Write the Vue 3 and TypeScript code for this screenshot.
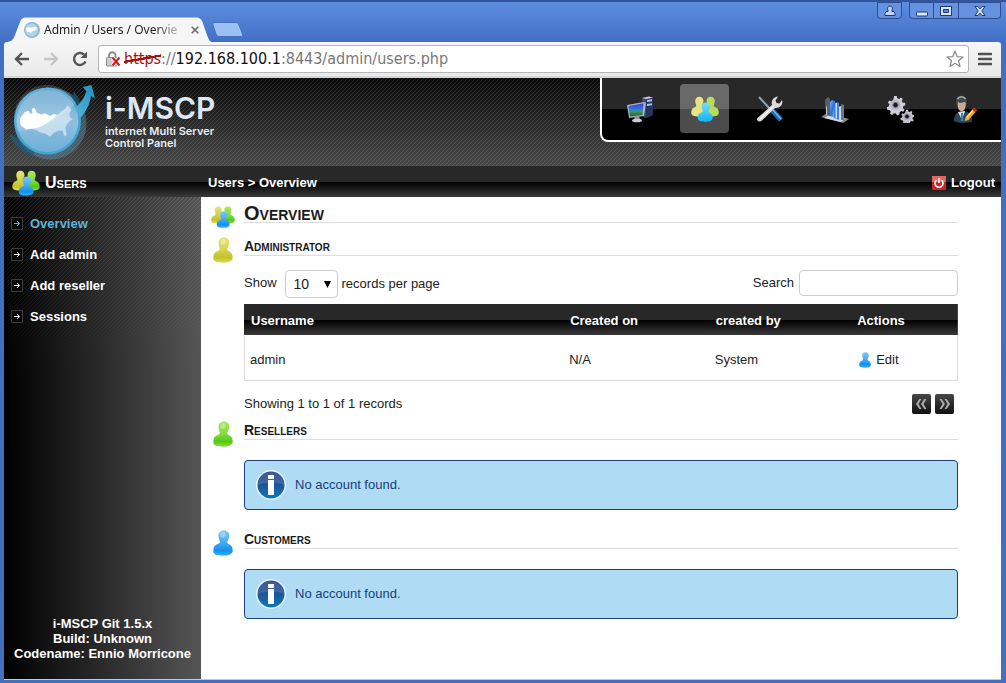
<script setup lang="ts">
import { ref } from 'vue'

interface NavItem { id: string; label: string }
interface Account { username: string; createdOn: string; createdBy: string }

const modules: NavItem[] = [
  { id: 'computer', label: 'General' },
  { id: 'users', label: 'Users' },
  { id: 'tools', label: 'System tools' },
  { id: 'stats', label: 'Statistics' },
  { id: 'gears', label: 'Settings' },
  { id: 'profile', label: 'Profile' },
]
const activeModule = ref('users')

const menu: string[] = ['Overview', 'Add admin', 'Add reseller', 'Sessions']
const activeMenu = ref('Overview')

const pageSize = ref('10')
const search = ref('')
const accounts: Account[] = [{ username: 'admin', createdOn: 'N/A', createdBy: 'System' }]

const emptyGroups = [
  { title: 'Resellers', tone: 'green' },
  { title: 'Customers', tone: 'blue' },
]
</script>

<template>
  <svg class="sprite" aria-hidden="true">
    <defs>
      <linearGradient id="gYellow" x1="0" y1="0" x2="0" y2="1"><stop offset="0" stop-color="#e6e27a" /><stop offset=".5" stop-color="#d4d348" /><stop offset=".8" stop-color="#c2c32a" /><stop offset="1" stop-color="#e0de50" /></linearGradient>
      <linearGradient id="gGreen" x1="0" y1="0" x2="0" y2="1"><stop offset="0" stop-color="#a8e860" /><stop offset=".5" stop-color="#80dc3c" /><stop offset=".8" stop-color="#54c814" /><stop offset="1" stop-color="#8be040" /></linearGradient>
      <linearGradient id="gBlue" x1="0" y1="0" x2="0" y2="1"><stop offset="0" stop-color="#7cc8f8" /><stop offset=".5" stop-color="#3fa9f2" /><stop offset=".8" stop-color="#1190ec" /><stop offset="1" stop-color="#35b4fa" /></linearGradient>
      <linearGradient id="gCyan" x1="0" y1="0" x2="0" y2="1"><stop offset="0" stop-color="#7edcff" /><stop offset="1" stop-color="#12b4f4" /></linearGradient>
      <linearGradient id="gGlobe" x1="0" y1="0" x2="0" y2="1"><stop offset="0" stop-color="#6da8cf" /><stop offset=".5" stop-color="#8fbfdf" /><stop offset="1" stop-color="#6fb0d8" /></linearGradient>
      <linearGradient id="gArrow" x1="0" y1="1" x2="1" y2="0"><stop offset="0" stop-color="#58b4da" /><stop offset="1" stop-color="#1f8fc0" /></linearGradient>
      <linearGradient id="gScreen" x1="0" y1="0" x2="0" y2="1"><stop offset="0" stop-color="#4a3cc8" /><stop offset=".5" stop-color="#2c80e0" /><stop offset=".6" stop-color="#3d9c58" /><stop offset="1" stop-color="#255c38" /></linearGradient>
      <linearGradient id="gInfo" x1="0" y1="0" x2="0" y2="1"><stop offset="0" stop-color="#2b3f86" /><stop offset=".5" stop-color="#1c5697" /><stop offset="1" stop-color="#0b78bd" /></linearGradient>
      <linearGradient id="gBar" x1="0" y1="0" x2="1" y2="1"><stop offset="0" stop-color="#7db4ff" /><stop offset=".5" stop-color="#2c6fd8" /><stop offset="1" stop-color="#9cc8ff" /></linearGradient>
      <path id="person" d="M11 .5C7.500 .5 5.400 2.800 5.500 6.200C5.600 9 6.800 10.200 6.900 12C6.900 13.300 5.300 13.600 3.500 14.500C1.200 15.600 .3 18 .3 21.300C.3 24.500 4 25.700 9.800 25.700C15.800 25.700 19.700 24.300 19.700 20.800C19.700 18 18.900 15.900 17.300 14.900C15.700 13.900 14.200 13.600 14.200 12C14.300 10.200 16.200 9 16.300 6.200C16.400 2.800 14.500 .5 11 .5Z" />
      <symbol id="yellow" viewBox="0 0 20 26"><use href="#person" fill="url(#gYellow)" /><ellipse cx="10" cy="5" rx="2.600" ry="3" fill="#fff" opacity=".3" /></symbol>
      <symbol id="green" viewBox="0 0 20 26"><use href="#person" fill="url(#gGreen)" /><ellipse cx="10" cy="5" rx="2.600" ry="3" fill="#fff" opacity=".3" /></symbol>
      <symbol id="blue" viewBox="0 0 20 26"><use href="#person" fill="url(#gBlue)" /><ellipse cx="10" cy="5" rx="2.600" ry="3" fill="#fff" opacity=".3" /></symbol>
      <symbol id="users" viewBox="0 0 30 28">
        <g transform="translate(0 .5) scale(.82 .84)"><use href="#person" fill="url(#gYellow)" /></g>
        <g transform="translate(30 .5) scale(-.82 .84)"><use href="#person" fill="url(#gGreen)" /></g>
        <g transform="translate(7 6.500) scale(.82 .82)"><use href="#person" fill="url(#gBlue)" /></g>
      </symbol>
      <symbol id="usersLight" viewBox="0 0 30 28">
        <g transform="translate(0 .5) scale(.82 .84)"><use href="#person" fill="#e6e480" /></g>
        <g transform="translate(30 .5) scale(-.82 .84)"><use href="#person" fill="#b4de58" /></g>
        <g transform="translate(7 6.500) scale(.82 .82)"><use href="#person" fill="url(#gCyan)" /></g>
      </symbol>
      <path id="gear" d="M-1.300 -9h2.600l.4 2.200 2 .7 1.700-1.500 1.900 1.600-1 2 1 1.800 2.200 0 .4 2.500-2.100.8-.4 2.100 1.700 1.500-1.300 2.100-2.100-.7-1.700 1.300 0 2.200-2.400.8-1.200-1.900-2.100-.2-1.500 1.700-2.200-1.200.6-2.200-1.300-1.700-2.300-.2-.3-2.500 2.100-.9.500-2.100-1.500-1.700 1.500-1.900 2 .9 1.700-1.200z" />
    </defs>
  </svg>

  <div class="window">
    <header class="titlebar">
      <div class="tab">
        <svg class="tab-shape" viewBox="0 0 206 25" preserveAspectRatio="none" aria-hidden="true"><path d="M0 25C5 25 7 23 9 18L14 5C15.500 1.500 17 .5 20 .5H190C194 .5 195 2 196.500 5L201 18C203 23 204 25 206 25Z" fill="#f6f6f6" /></svg>
        <svg class="favicon" viewBox="0 0 16 16" aria-hidden="true"><circle cx="8" cy="8" r="8" fill="#8cb9d6" /><circle cx="7.500" cy="8" r="6.500" fill="#b5d4e8" /><path d="M2 6l3-1 2 1 3-1 3 0-1 3-3 1-2 2-2-1-2 0z" fill="#fff" /></svg>
        <span class="tab-title">Admin / Users / Overvie</span>
        <button class="tab-close" aria-label="Close tab"><svg viewBox="0 0 8 8"><path d="M.7.7l6.600 6.600M7.300.7L.7 7.300" stroke="#666" stroke-width="1.500" /></svg></button>
      </div>
      <button class="new-tab" aria-label="New tab"><svg viewBox="0 0 32 16"><path d="M3 .5H23C25 .5 26 1 27 3L30.500 12C31 14 30.500 14.500 29 14.500H8C6 14.500 5 14 4 12L1 3C.5 1 1 .5 3 .5Z" fill="#9cc0f2" stroke="#4373bd" /></svg></button>
      <div class="win-buttons">
        <button class="win user" aria-label="Profile"><svg viewBox="0 0 12 12"><path d="M6 1a2.500 2.500 0 0 1 2 4v1.500h2l1 2v2H1v-2l1-2h2V5a2.500 2.500 0 0 1 2-4z" fill="#bdd2f5" stroke="#1c3873" /></svg></button>
        <div class="win-group">
          <button class="win min" aria-label="Minimize"><svg viewBox="0 0 12 12"><rect x=".5" y="7" width="11" height="4" rx="1" fill="#d9e5fa" stroke="#1c3873" /></svg></button>
          <button class="win mid" aria-label="Maximize"><svg viewBox="0 0 12 12"><path d="M.5 1.500h11v9H.5z" fill="#d9e5fa" stroke="#1c3873" /><path d="M3.500 4.500h5v3h-5z" fill="#5c8bdc" stroke="#1c3873" /></svg></button>
          <button class="win end" aria-label="Close"><svg viewBox="0 0 12 12"><path d="M1 1.500h3l2 2.500 2-2.500h3L7.700 6 11 10.500H8L6 8l-2 2.500H1L4.300 6z" fill="#d9e5fa" stroke="#1c3873" /></svg></button>
        </div>
      </div>
    </header>

    <div class="toolbar">
      <button class="tool" aria-label="Back"><svg viewBox="0 0 16 16"><path d="M15 8H2.500M8 2L2 8l6 6" fill="none" stroke="#555" stroke-width="2.400" /></svg></button>
      <button class="tool" aria-label="Forward"><svg viewBox="0 0 16 16"><path d="M1 8h12.500M8 2l6 6-6 6" fill="none" stroke="#c6c6c6" stroke-width="2.400" /></svg></button>
      <button class="tool" aria-label="Reload"><svg viewBox="0 0 16 16"><path d="M13.500 10.500A6 6 0 1 1 12 3.500" fill="none" stroke="#555" stroke-width="2.400" /><path d="M15 .5V7H8.500z" fill="#555" /></svg></button>
      <div class="omnibox">
        <svg class="lock" viewBox="0 0 15 16" aria-hidden="true"><path d="M3 7V4.500a3 3 0 0 1 6.500 0V7" fill="none" stroke="#888" stroke-width="1.800" /><rect x=".5" y="6.500" width="11" height="8.500" rx="1" fill="#ccc" stroke="#888" /><path d="M6.500 6.500l7 8M13.500 6.500l-7 8" stroke="#fff" stroke-width="3.500" /><path d="M6.500 6.500l7 8M13.500 6.500l-7 8" stroke="#cc1b1b" stroke-width="2" /></svg>
        <div class="url" role="textbox" aria-label="Address" contenteditable="true" spellcheck="false"><span class="scheme">https</span>://<span class="host">192.168.100.1</span>:8443/admin/users.php</div>
        <button class="star" aria-label="Bookmark"><svg viewBox="0 0 18 18"><path d="M9 1.200l2.200 5.400 5.800.4-4.500 3.700 1.500 5.700L9 13.300l-5 3.100 1.500-5.700L1 7l5.800-.4z" fill="#fff" stroke="#888" stroke-width="1.200" stroke-linejoin="round" /></svg></button>
      </div>
      <button class="tool menu-btn" aria-label="Menu"><svg viewBox="0 0 14 14"><path d="M1 2h12M1 7h12M1 12h12" stroke="#505050" stroke-width="2.600" stroke-linecap="round" /></svg></button>
    </div>

    <div class="page">
      <header class="masthead">
        <a href="#" class="brand">
          <svg class="globe" viewBox="0 0 94 84" aria-hidden="true">
            <circle cx="46.500" cy="45.500" r="36" fill="#5f93ad" opacity=".45" />
            <path d="M5 56A39 39 0 0 0 30 79L30 72A32 32 0 0 1 14 60Z" fill="#245c79" opacity=".7" />
            <path d="M66 22l4.500-8 5 8-3 10z" fill="#1f4a5c" />
            <circle cx="43.500" cy="43" r="33.500" fill="#3fa5d6" />
            <circle cx="43.500" cy="43" r="31" fill="url(#gGlobe)" />
            <g transform="scale(.3333)">
              <path d="M48 122L62 103 74 98 80 108 86 106 84 92 92 90 98 104 112 110 122 106 138 114 150 108 160 110 172 100 184 92 190 82 196 86 202 96 196 108 198 118 206 124 196 130 188 140 184 150 188 172 180 174 176 158 164 158 150 164 138 176 122 166 110 164 96 156 80 152 66 156 50 142Z" fill="#fff" opacity=".5" />
              <path d="M48 122L62 103 74 98 80 108 86 106 84 92 92 90 98 104 112 110 122 106 138 114 150 108 158 112C140 130 120 144 98 150L80 152 66 152 50 142Z" fill="#fff" />
              <path d="M40 160C100 156 160 132 216 76A93 93 0 0 0 40 160Z" fill="#fff" opacity=".14" />
            </g>
            <path d="M76 40C82 34 86 26 87 18L91 20.500 87.500 7 79 9 82.500 13.500C80 20 77 25 71 30Z" fill="url(#gArrow)" />
          </svg>
          <span class="brand-text">
            <strong>i-MSCP</strong>
            <span>internet Multi Server<br>Control Panel</span>
          </span>
        </a>
        <nav class="modules" aria-label="Modules">
          <a v-for="m in modules" :key="m.id" href="#" :aria-label="m.label" :class="{ active: m.id === activeModule }" @click.prevent="activeModule = m.id">
            <svg v-if="m.id === 'computer'" viewBox="0 0 28 28"><path d="M16 3l7-1.500 4 1.500V20l-7 3-4-2z" fill="#394a6c" /><path d="M20 3.500L27 3v17l-7 3z" fill="#26355c" /><path d="M21 5l5-.7v2L21 7zM21 9l5-.7v2L21 11z" fill="#b0c0e6" /><path d="M16 3l7-1.500 4 1.200-7 1.300z" fill="#c5cfdf" /><path d="M1 10l17-3 2 1-2 13-15 2z" fill="#a9b4cc" /><path d="M2.500 11l15-2.700L16.500 20 4 21.500z" fill="url(#gScreen)" /><path d="M9 21l4 0 1 3 1 2H7l1-2z" fill="#8d949c" /><ellipse cx="11" cy="25.500" rx="5" ry="1.800" fill="#ccc" /></svg>
            <svg v-else-if="m.id === 'users'" viewBox="0 0 30 28"><use href="#usersLight" /></svg>
            <svg v-else-if="m.id === 'tools'" viewBox="0 0 28 28"><path d="M3 2l12 13" stroke="#8ea5b5" stroke-width="2" /><path d="M15 14l10 11" stroke="#1f68b4" stroke-width="5" /><path d="M16 14l9 10" stroke="#79b7ee" stroke-width="1.300" /><path d="M1.500 25.500c-1-1-.5-2.200.5-3L16 10c-1-4 1-8 6-8.500l-2.500 4 1 2.500 3 .5L26 5c1.500 5-2.500 8.500-7 8L6 25.500c-1.500 1.300-3.500 1.300-4.500 0z" fill="#d9d9d9" /><path d="M4 24L18 11" stroke="#fff" stroke-width="1.200" /></svg>
            <svg v-else-if="m.id === 'stats'" viewBox="0 0 28 28"><path d="M0 22l6-4 22 6-6 4z" fill="#858585" /><path d="M3 23l5-3 16 4-4 3z" fill="#d7d7d7" /><path d="M4 5l3-3 2 2v17l-4-1z" fill="#59626c" /><path d="M5 12l1-1v9l-1 0z" fill="#bfc8d0" /><path d="M9 7l2-2 3 1v17l-5-2z" fill="url(#gBar)" /><path d="M13 9l3-2 2 1v17l-5-2z" fill="#3c7fdf" /><path d="M14.500 8l1.500 0v16l-1.500-1z" fill="#bedafa" /><path d="M18 12l1-1 2 1v13l-3-1z" fill="#c9dced" /><path d="M20 10l1-1 2 1v15l-3 0z" fill="#6c7782" /></svg>
            <svg v-else-if="m.id === 'gears'" viewBox="0 0 28 28"><use href="#gear" transform="translate(9.500 10)" fill="#cfcfda" /><circle cx="9.500" cy="10" r="5.500" fill="#b9b9c8" /><circle cx="9.500" cy="10" r="2.700" fill="#171717" stroke="#868694" /><g transform="translate(21 21.500) scale(.75)"><use href="#gear" fill="#c3c3d0" /><circle r="5" fill="#aeaebd" /><circle r="2.800" fill="#111" stroke="#777" /></g></svg>
            <svg v-else viewBox="0 0 28 28"><path d="M3 26c0-6 2-8.500 7-9.500l5 0c4 1 6 5 6 10-5 2-14 2-18-.5z" fill="#2b4558" /><path d="M7 17l4 8 3-9z" fill="#d5e5ef" /><path d="M10 18l2 0 .5 8H10z" fill="#3185b5" /><path d="M6 7c0-5 8-6 9 0l-.5 5c-1 5-5.500 6-7.500 1z" fill="#c9aa93" /><path d="M6 12L5 6c0-7 11-7 11 1v3l-2-3-5 1-2-1z" fill="#45484a" /><path d="M6.500 4c2-3 6-3 8 0" stroke="#a5a9ab" stroke-width="1.600" fill="none" /><path d="M14.500 22.500l7-8 3 2.500-7 8-4 1z" fill="#efab29" /><path d="M15.500 22.500l7-8" stroke="#ffe183" stroke-width="1.400" /><path d="M21 14.500l2-2 3.500 2.500-2 2.500z" fill="#cd2a1c" /></svg>
          </a>
        </nav>
      </header>

      <div class="location">
        <h1 class="module-title"><svg viewBox="0 0 30 28" aria-hidden="true"><use href="#users" /></svg>Users</h1>
        <nav class="crumbs" aria-label="Breadcrumb"><a href="#">Users</a> &gt; <a href="#">Overview</a></nav>
        <a class="logout" href="#"><svg viewBox="0 0 14 14" aria-hidden="true"><rect width="14" height="14" rx="1" fill="#c82525" /><path d="M0 0h14v6H0z" fill="#e36666" /><path d="M4.500 4.200a4 4 0 1 0 5 0M7 2v5" fill="none" stroke="#fff" stroke-width="1.600" /></svg>Logout</a>
      </div>

      <div class="columns">
        <aside class="sidebar">
          <ul>
            <li v-for="item in menu" :key="item">
              <a href="#" :class="{ current: item === activeMenu }" @click.prevent="activeMenu = item">
                <svg viewBox="0 0 12 13" aria-hidden="true"><path d="M.5.5h11v12H.5z" fill="#080808" stroke="#3c3c3c" /><path d="M3 6.500h5.500M6 4l2.500 2.500L6 9" fill="none" stroke="currentColor" /></svg>{{ item }}
              </a>
            </li>
          </ul>
          <p class="version">i-MSCP Git 1.5.x<br>Build: Unknown<br>Codename: Ennio Morricone</p>
        </aside>

        <main class="content">
          <section class="group lead">
            <svg class="group-icon" viewBox="0 0 30 28" aria-hidden="true"><use href="#users" /></svg>
            <h2 class="large">Overview</h2>
          </section>

          <section class="group">
            <svg class="group-icon" viewBox="0 0 20 26" aria-hidden="true"><use href="#yellow" /></svg>
            <div>
              <h2>Administrator</h2>
              <div class="filters">
                <label for="page-size">Show</label>
                <span class="select-box">
                  <select id="page-size" v-model="pageSize"><option>10</option><option>15</option><option>25</option><option>50</option></select>
                  <svg viewBox="0 0 7 7" aria-hidden="true"><path d="M0 0h7L3.500 7z" /></svg>
                </span>
                <span>records per page</span>
                <label class="search-label" for="search">Search</label>
                <input id="search" v-model="search" type="text">
              </div>
              <table>
                <colgroup><col class="c-user"><col class="c-date"><col class="c-by"><col></colgroup>
                <thead><tr><th>Username</th><th>Created on</th><th>created by</th><th>Actions</th></tr></thead>
                <tbody>
                  <tr v-for="a in accounts" :key="a.username">
                    <td>{{ a.username }}</td><td>{{ a.createdOn }}</td><td>{{ a.createdBy }}</td>
                    <td><a class="edit" href="#"><svg viewBox="0 0 20 26" preserveAspectRatio="none" aria-hidden="true"><use href="#person" fill="url(#gBlue)" /></svg>Edit</a></td>
                  </tr>
                </tbody>
              </table>
              <div class="table-foot">
                <span>Showing 1 to 1 of 1 records</span>
                <div class="pager">
                  <button aria-label="Previous page"><svg viewBox="0 0 19 20"><path d="M9.500 5h-2.200L4 10l3.300 5h2.200L6.500 10zM14.500 5h-2.200L9 10l3.300 5h2.200L11.500 10z" /></svg></button>
                  <button aria-label="Next page"><svg viewBox="0 0 19 20"><path d="M4.500 5h2.200L10 10l-3.300 5H4.500L7.500 10zM9.500 5h2.200L15 10l-3.300 5H9.500L12.500 10z" /></svg></button>
                </div>
              </div>
            </div>
          </section>

          <section v-for="g in emptyGroups" :key="g.title" class="group empty">
            <svg class="group-icon" viewBox="0 0 20 26" aria-hidden="true"><use :href="'#' + g.tone" /></svg>
            <div>
              <h2>{{ g.title }}</h2>
              <p class="notice">
                <svg viewBox="0 0 30 30" aria-hidden="true"><circle cx="15" cy="15" r="15" fill="#e8f5fd" /><circle cx="15" cy="15" r="13.500" fill="url(#gInfo)" /><path d="M2 15C8 12 22 12 28 15A13 13 0 0 0 2 15Z" fill="#fff" opacity=".12" /><path d="M12 5h6v4h-6zM12 10h6v15h-6z" fill="#fff" /></svg>
                No account found.
              </p>
            </div>
          </section>
        </main>
      </div>
    </div>
  </div>
</template>

<style>
body { background: #3f69b0; }
</style>

<style scoped>
.sprite { position: absolute; width: 0; height: 0; }
.window, .window * { box-sizing: border-box; }
.window {
  display: flex; flex-direction: column; min-height: 100vh;
  padding: 0 5px 4px 4px;
  border-bottom: 1px solid #2f4d80;
  background: linear-gradient(#31549c 0 2px, #5d8ddf 2px, #416fc6 42px, #4270bb);
  font: 13px/16px "Liberation Sans", Arial, sans-serif; color: #222;
}
button { padding: 0; border: 0; background: none; display: block; }
svg { display: block; flex: none; }
a { color: inherit; text-decoration: none; }

/* browser frame */
.titlebar { display: flex; height: 42px; align-items: flex-end; }
.tab { position: relative; display: flex; align-items: center; width: 206px; height: 25px; margin-left: 2px; padding: 0 10px 0 18px; }
.tab-shape { position: absolute; inset: 0; width: 100%; height: 100%; }
.favicon { position: relative; width: 16px; height: 16px; }
.tab-title {
  position: relative; flex: 1; margin-left: 4px; white-space: nowrap;
  font: 12px/16px "Noto Sans", sans-serif; color: #222;
  mask-image: linear-gradient(90deg, #000 80%, rgba(0, 0, 0, .2));
}
.tab-close { position: relative; width: 8px; margin: 0 3px 0 10px; }
.new-tab { width: 32px; height: 16px; margin: 0 0 4px; }
.win-buttons { display: flex; gap: 7px; margin-left: auto; align-self: flex-start; padding-top: 2px; }
.win-group { display: flex; }
.win { display: flex; align-items: center; justify-content: center; width: 25px; height: 17px; border: 1px solid #2d4f92; background: #6491e0; }
.win svg { width: 12px; height: 12px; }
.user { border-radius: 0 0 4px 4px; }
.min { border-radius: 0 0 0 4px; }
.mid { border-left: 0; }
.end { width: 42px; border-left: 0; border-radius: 0 0 4px; }
.toolbar { display: flex; align-items: center; gap: 13px; height: 36px; padding: 0 9px 0 10px; border-bottom: 2px solid #d2d6d6; border-radius: 3px 3px 0 0; background: linear-gradient(#f6f6f6, #e9e9e9); }
.tool { width: 16px; }
.menu-btn { width: 14px; }
.omnibox { display: flex; align-items: center; flex: 1; height: 28px; margin: 0 -4px 0 -3px; padding: 0 4px 0 7px; border: 1px solid #b4b4b4; border-radius: 3px; background: #fff; }
.lock { width: 15px; height: 16px; margin-right: 3px; }
.url { flex: 1; font: 16px/22px "DejaVu Sans Condensed", "DejaVu Sans", sans-serif; color: #777; white-space: nowrap; outline: 0; }
.scheme { color: #a51010; background: linear-gradient(170deg, transparent 46%, #a51010 47% 55%, transparent 56%); }
.host { color: #111; }
.star { width: 18px; }

/* panel header */
.page { display: flex; flex-direction: column; flex: 1; background: #fff; box-shadow: 0 1px #b8cdec; }
.masthead {
  display: flex; justify-content: space-between; align-items: flex-start; height: 88px;
  background:
    linear-gradient(135deg, transparent 42%, rgba(255, 255, 255, .13) 42% 58%, transparent 58%) 0 0 / 4px 4px,
    linear-gradient(#080808, #484848);
}
.brand { display: flex; color: #e9eef4; }
.globe { width: 94px; height: 84px; }
.brand-text { padding: 13px 0 0 7px; font: 600 11px/12px Inter, sans-serif; }
.brand-text strong { display: block; font: 600 30px/34px Inter, sans-serif; color: #dce8f6; }
.brand-text > span { display: block; }
.modules { display: flex; gap: 16px; padding: 6px 12px 7px 13px; border: solid #fff; border-width: 0 0 2px 2px; border-radius: 0 0 0 8px; background: linear-gradient(#282828 31px, #000 31px); }
.modules a { display: grid; place-items: center; width: 49px; height: 49px; border-radius: 4px; }
.modules svg { width: 28px; height: 28px; }
.modules .active { background: linear-gradient(#696969 25px, #4c4c4c 25px); }
.location { display: flex; align-items: center; height: 31px; padding: 2px 6px 0 8px; background: linear-gradient(#282828 16px, #000 16px, #3a3a3a); color: #fff; font-weight: bold; }
.module-title { display: flex; align-items: center; gap: 5px; width: 196px; margin: 0; font-size: 16px; font-variant: small-caps; }
.module-title svg { width: 28px; height: 26px; }
.logout { display: flex; align-items: center; gap: 5px; margin-left: auto; }
.logout svg { width: 14px; height: 14px; }

/* sidebar */
.columns { display: flex; flex: 1; }
.sidebar {
  position: relative; display: flex; flex-direction: column; justify-content: space-between;
  width: 197px; padding: 11px 7px 18px;
  background: linear-gradient(90deg, #000, #555); color: #fff; font-weight: bold;
}
.sidebar::before {
  content: ""; position: absolute; inset: 0 0 auto; height: 180px;
  background: linear-gradient(135deg, transparent 42%, rgba(255, 255, 255, .13) 42% 58%, transparent 58%) 0 0 / 4px 4px;
  mask-image: linear-gradient(#000, transparent);
}
.sidebar ul { position: relative; margin: 0; padding: 0; list-style: none; }
.sidebar li a { display: flex; align-items: center; gap: 7px; height: 31px; }
.sidebar li svg { width: 12px; height: 13px; }
.current { color: #5cb3d9; }
.version { margin: 0; line-height: 15px; text-align: center; white-space: nowrap; }

/* content */
.content { flex: 1; min-width: 0; padding: 7px 43px 40px 10px; }
.group { display: grid; grid-template-columns: 24px 1fr; column-gap: 9px; }
.lead { height: 33px; }
.empty { padding-bottom: 20px; }
.group-icon { width: 24px; height: 26px; }
h2 { margin: 0; height: 19px; border-bottom: 1px solid #ddd; font-size: 14px; line-height: 18px; font-variant: small-caps; color: #1b1b1b; }
.large { font-size: 20px; }
.filters { display: flex; align-items: center; height: 28px; margin: 14px 0 6px; }
.select-box { position: relative; margin: 0 4px 0 8px; }
.select-box svg { position: absolute; right: 7px; top: 11px; width: 7px; height: 7px; pointer-events: none; }
select, input { border: 1px solid #ccc; border-radius: 4px; background: #fff; color: #222; font: 14px/18px "Liberation Sans", Arial, sans-serif; }
select { display: block; appearance: none; width: 53px; height: 28px; padding: 0 8px; }
.search-label { margin-left: auto; }
input { width: 159px; height: 26px; margin-left: 5px; padding: 0 5px; }
.filters label, .filters input { align-self: flex-start; line-height: 26px; }
table { width: 100%; table-layout: fixed; border-collapse: separate; border-spacing: 0; }
.c-user { width: 44.7%; }
.c-date { width: 20.4%; }
.c-by { width: 19.8%; }
thead { background: linear-gradient(#282828 16px, #000 16px, #3a3a3a); }
th { height: 31px; padding: 2px 7px 0; text-align: left; color: #fff; }
td { height: 46px; padding: 4px 6px 0; border-bottom: 1px solid #ddd; }
td:first-child { border-left: 1px solid #ddd; padding-left: 5px; }
td:last-child { border-right: 1px solid #ddd; }
.edit { display: flex; align-items: center; gap: 5px; padding-left: 3px; }
.edit svg { width: 12px; height: 16px; }
.table-foot { display: flex; justify-content: space-between; align-items: center; margin: 13px 0 7px; }
.pager { display: flex; gap: 4px; padding-right: 4px; }
.pager button { width: 19px; height: 20px; border-radius: 2px; background: linear-gradient(#484848, #111); }
.pager path { fill: #aaa; }
.notice { display: flex; align-items: center; gap: 9px; height: 50px; margin: 20px 0 0; padding: 0 11px; border: 1px solid #17407c; border-radius: 4px; background: #afdcf4; color: #17407c; }
.notice svg { width: 30px; height: 30px; }
</style>
